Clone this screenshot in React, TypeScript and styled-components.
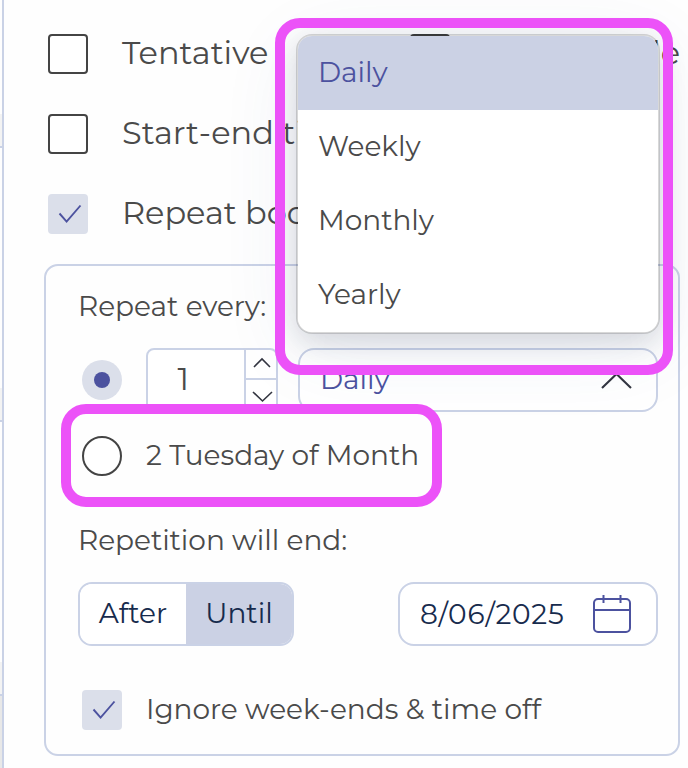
import React from "react";
import styled, { createGlobalStyle } from "styled-components";

const Global = createGlobalStyle`
  *, *::before, *::after { box-sizing: border-box; }
  body { margin: 0; background: #fefefe; font-family: Montserrat, Inter, sans-serif; font-weight: 400; }
`;

const line = "#cad2e6";
const fill = "#cbd1e4";
const indigo = "#4c529f";
const ink = "#444444";
const textInk = "#4a4a4a";
const navy = "#172b4d";

const Page = styled.div`
  position: relative;
  display: flex;
  width: 688px;
  height: 768px;
  overflow: hidden;
`;

const Gutter = styled.div`
  display: flex;
  flex-direction: column;
  width: 4px;
  flex: none;
  border-right: 2px solid ${line};
`;

const Slot = styled.div<{ $h: number; $shade?: string; $ruled?: boolean }>`
  height: ${(p) => p.$h}px;
  background: ${(p) => p.$shade ?? "transparent"};
  border-bottom: ${(p) => (p.$ruled ? `2px solid ${line}` : "none")};
`;

const Form = styled.div`
  flex: 1;
  padding: 34px 8px 0 40px;
`;

const Options = styled.div`
  display: flex;
  flex-direction: column;
  gap: 40px;
  padding-left: 4px;
`;

const Row = styled.div`
  display: flex;
  align-items: center;
  height: 40px;
`;

const Check = styled.div<{ $on?: boolean }>`
  display: flex;
  flex: none;
  width: 40px;
  height: 40px;
  border-radius: 4px;
  border: ${(p) => (p.$on ? "none" : `2px solid ${ink}`)};
  background: ${(p) => (p.$on ? "#dbdfea" : "#fff")};
`;

const Radio = styled.div<{ $on?: boolean }>`
  display: flex;
  align-items: center;
  justify-content: center;
  flex: none;
  width: 40px;
  height: 40px;
  border-radius: 50%;
  border: ${(p) => (p.$on ? "none" : `2px solid ${ink}`)};
  background: ${(p) => (p.$on ? "#dbdfea" : "#fff")};
`;

const Dot = styled.div`
  width: 16px;
  height: 16px;
  border-radius: 50%;
  background: ${indigo};
`;

const Text = styled.span<{
  $size?: number;
  $track?: number;
  $color?: string;
  $indent?: number;
  $lift?: number;
}>`
  font-size: ${(p) => p.$size ?? 28}px;
  line-height: 36px;
  letter-spacing: ${(p) => p.$track ?? -0.03}px;
  color: ${(p) => p.$color ?? textInk};
  margin-left: ${(p) => p.$indent ?? 0}px;
  padding-bottom: ${(p) => p.$lift ?? 2}px;
  white-space: nowrap;
`;

const SecondOption = styled.div`
  display: flex;
  align-items: center;
  margin-left: auto;
`;

const Panel = styled.div`
  display: flex;
  flex-direction: column;
  height: 492px;
  margin-top: 30px;
  padding: 22px 20px 0 32px;
  border: 2px solid ${line};
  border-radius: 14px;
`;

const Controls = styled.div<{ $top: number; $inset?: number }>`
  display: flex;
  align-items: center;
  height: 64px;
  margin-top: ${(p) => p.$top}px;
  padding-left: ${(p) => p.$inset ?? 0}px;
`;

const PanelRow = styled(Row)<{ $top: number }>`
  margin-top: ${(p) => p.$top}px;
  padding-left: 4px;
`;

const Caption = styled.div<{ $top: number }>`
  display: flex;
  height: 38px;
  margin-top: ${(p) => p.$top}px;
`;

const Stepper = styled.div`
  display: flex;
  flex: none;
  width: 132px;
  height: 64px;
  margin-left: 24px;
  border: 2px solid ${line};
  border-radius: 8px;
  background: #fff;
`;

const StepValue = styled.div`
  display: flex;
  align-items: center;
  flex: 1;
`;

const StepButtons = styled.div`
  display: flex;
  flex-direction: column;
  width: 32px;
  border-left: 2px solid ${line};
`;

const StepButton = styled.div`
  display: flex;
  align-items: center;
  justify-content: center;
  height: 28px;
  padding: 0 0 4px 2px;
  & + & { border-top: 2px solid ${line}; height: 32px; padding: 3px 0 0 2px; }
`;

const Field = styled.div<{ $w: number }>`
  display: flex;
  align-items: center;
  justify-content: space-between;
  width: ${(p) => p.$w}px;
  height: 64px;
  margin-left: auto;
  padding: 0 24px 0 20px;
  border: 2px solid ${line};
  border-radius: 16px;
  background: #fff;
`;

const Toggle = styled.div`
  display: flex;
  width: 216px;
  height: 64px;
  border: 2px solid ${line};
  border-radius: 14px;
  overflow: hidden;
`;

const Segment = styled.div<{ $on?: boolean }>`
  display: flex;
  align-items: center;
  justify-content: center;
  width: 106px;
  background: ${(p) => (p.$on ? fill : "#fff")};
`;

const Menu = styled.div`
  position: absolute;
  left: 296px;
  top: 34px;
  width: 364px;
  height: 300px;
  border: 2px solid rgba(0, 0, 0, 0.15);
  border-radius: 16px;
  background: #fff;
  background-clip: padding-box;
  overflow: hidden;
  box-shadow: 0 8px 28px rgba(20, 30, 50, 0.14), 0 16px 80px rgba(60, 90, 150, 0.09);
`;

const MenuItem = styled.div<{ $on?: boolean }>`
  display: flex;
  align-items: center;
  height: 74px;
  padding-left: 20px;
  background: ${(p) => (p.$on ? fill : "#fff")};
`;

const Highlight = styled.div<{ $x: number; $y: number; $w: number; $h: number }>`
  position: absolute;
  left: ${(p) => p.$x}px;
  top: ${(p) => p.$y}px;
  width: ${(p) => p.$w}px;
  height: ${(p) => p.$h}px;
  border: 10px solid #ec52f8;
  border-radius: 25px;
`;

const Tick = () => (
  <svg width="40" height="40" fill="none" stroke={indigo} strokeWidth="1.9">
    <path d="M11.5 19.5 L18.6 27.6 L32.5 11.5" />
  </svg>
);

const Chevron = ({ w, h, down }: { w: number; h: number; down?: boolean }) => (
  <svg width={w + 2} height={h + 2} fill="none" stroke="#333540" strokeWidth={w > 20 ? 2.1 : 1.6}>
    <path d={down ? `M1 1 L${w / 2 + 1} ${h} L${w + 1} 1` : `M1 ${h + 1} L${w / 2 + 1} 2 L${w + 1} ${h + 1}`} />
  </svg>
);

const CalendarIcon = () => (
  <svg width="40" height="40" fill="none" stroke={indigo} strokeWidth="2">
    <rect x="2" y="5" width="36" height="33" rx="4" />
    <path d="M2 16H38M11.5 1V9M28.5 1V9" />
  </svg>
);

const choices = ["Daily", "Weekly", "Monthly", "Yearly"];

export default function App() {
  return (
    <Page>
      <Global />
      <Gutter>
        <Slot $h={114} />
        <Slot $h={34} $shade="#f3f3f3" $ruled />
        <Slot $h={240} />
        <Slot $h={34} $shade="#f3f3f3" $ruled />
        <Slot $h={240} />
        <Slot $h={34} $shade="#f3f3f3" $ruled />
        <Slot $h={72} $shade="#e8e8e8" />
      </Gutter>
      <Form>
        <Options>
          <Row>
            <Check />
            <Text $size={32} $indent={34}>Tentative</Text>
            <SecondOption>
              <Check />
              <Text $size={32} $indent={34} $track={0}>Non-billable</Text>
            </SecondOption>
          </Row>
          <Row>
            <Check />
            <Text $size={32} $indent={34}>Start-end time</Text>
          </Row>
          <Row>
            <Check $on><Tick /></Check>
            <Text $size={32} $indent={34}>Repeat booking</Text>
          </Row>
        </Options>
        <Panel>
          <Caption $top={0}><Text>Repeat every:</Text></Caption>
          <Controls $top={22} $inset={4}>
            <Radio $on><Dot /></Radio>
            <Stepper>
              <StepValue><Text $size={32} $indent={29.5}>1</Text></StepValue>
              <StepButtons>
                <StepButton><Chevron w={16} h={9} /></StepButton>
                <StepButton><Chevron w={19} h={10} down /></StepButton>
              </StepButtons>
            </Stepper>
            <Field $w={360}>
              <Text $color={indigo}>Daily</Text>
              <Chevron w={29} h={15} />
            </Field>
          </Controls>
          <PanelRow $top={24}>
            <Radio />
            <Text $indent={24}>2 Tuesday of Month</Text>
          </PanelRow>
          <Caption $top={46}><Text>Repetition will end:</Text></Caption>
          <Controls $top={22}>
            <Toggle>
              <Segment><Text $color={navy}>After</Text></Segment>
              <Segment $on><Text $color={navy}>Until</Text></Segment>
            </Toggle>
            <Field $w={260}>
              <Text $color={navy} $track={0.72} $lift={0}>8/06/2025</Text>
              <CalendarIcon />
            </Field>
          </Controls>
          <PanelRow $top={44}>
            <Check $on><Tick /></Check>
            <Text $indent={24}>Ignore week-ends &amp; time off</Text>
          </PanelRow>
        </Panel>
      </Form>
      <Menu>
        {choices.map((name, i) => (
          <MenuItem key={name} $on={i === 0}>
            <Text $color={i === 0 ? indigo : textInk}>{name}</Text>
          </MenuItem>
        ))}
      </Menu>
      <Highlight $x={275} $y={18} $w={398} $h={357} />
      <Highlight $x={61} $y={404} $w={381} $h={103} />
    </Page>
  );
}
